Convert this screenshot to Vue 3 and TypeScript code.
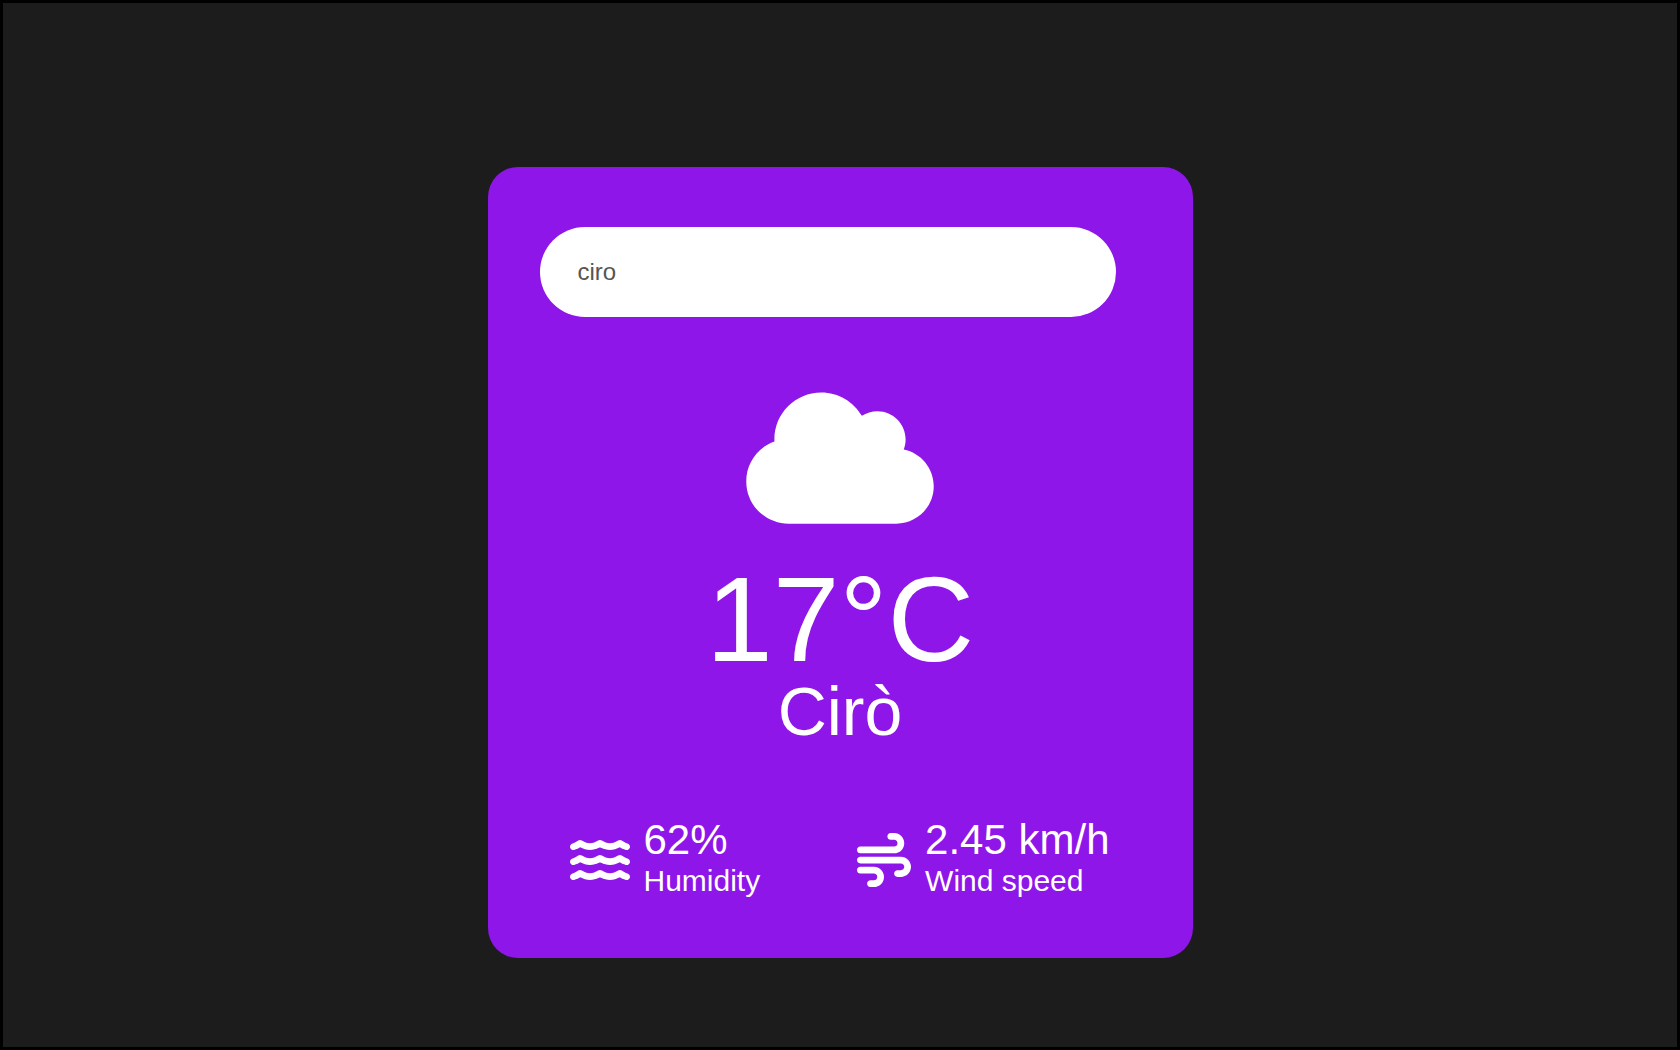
<script setup lang="ts">
import { ref } from 'vue'

interface Weather {
  temperature: number
  city: string
  humidity: number
  windSpeed: number
}

const query = ref('ciro')
const weather = ref<Weather>({
  temperature: 17,
  city: 'Cirò',
  humidity: 62,
  windSpeed: 2.45,
})
</script>

<template>
  <div class="page">
    <main class="card">
      <form class="search" role="search" @submit.prevent>
        <input v-model="query" class="search-input" type="text" aria-label="City" autocomplete="off" spellcheck="false" />
      </form>

      <section class="current">
        <svg class="cloud" viewBox="0 0 640 512" aria-hidden="true">
          <path d="M0 336c0 79.5 64.5 144 144 144H512c70.7 0 128-57.3 128-128c0-61.9-44-113.6-102.4-125.4c4.1-10.7 6.4-22.4 6.4-34.6c0-53-43-96-96-96c-19.7 0-38.1 6-53.3 16.2C367 64.2 315.3 32 256 32C167.6 32 96 103.6 96 192c0 2.7 .1 5.4 .2 8.1C40.2 219.8 0 273.2 0 336z" />
        </svg>
        <h1 class="temperature">{{ weather.temperature }}°C</h1>
        <h2 class="city">{{ weather.city }}</h2>
      </section>

      <section class="details">
        <div class="detail">
          <svg class="icon-water" viewBox="0 0 576 512" aria-hidden="true">
            <defs>
              <path id="wave" d="M269.5 69.9c11.1-7.9 25.9-7.9 37 0C329 85.4 356.5 96 384 96c26.9 0 55.4-10.8 77.4-26.1c11.9-8.5 28.1-7.8 39.2 1.7c14.4 11.9 32.5 21 50.6 25.2c17.2 4 27.9 21.2 23.9 38.4s-21.2 27.9-38.4 23.9c-24.5-5.7-44.9-16.5-58.2-25C449.5 149.7 417 160 384 160c-31.9 0-60.6-9.9-80.4-18.9c-5.8-2.7-11.1-5.3-15.6-7.7c-4.5 2.4-9.7 5.1-15.6 7.7c-19.8 9-48.5 18.9-80.4 18.9c-33 0-65.5-10.3-94.5-25.8c-13.4 8.4-33.7 19.3-58.2 25c-17.2 4-34.4-6.7-38.4-23.9s6.7-34.4 23.9-38.4C42.8 92.6 61 83.5 75.3 71.6c11.1-9.5 27.3-10.1 39.2-1.7C136.7 85.2 165.1 96 192 96c27.5 0 55-10.6 77.5-26.1z" />
            </defs>
            <use href="#wave" />
            <use href="#wave" y="144" />
            <use href="#wave" y="288" />
          </svg>
          <div>
            <p class="value">{{ weather.humidity }}%</p>
            <p class="label">Humidity</p>
          </div>
        </div>
        <div class="detail">
          <svg class="icon-wind" viewBox="0 0 512 512" aria-hidden="true">
            <path d="M288 32c0 17.7 14.3 32 32 32h32c17.7 0 32 14.3 32 32s-14.3 32-32 32H32c-17.7 0-32 14.3-32 32s14.3 32 32 32H352c53 0 96-43 96-96s-43-96-96-96H320c-17.7 0-32 14.3-32 32zm64 352c0 17.7 14.3 32 32 32h32c53 0 96-43 96-96s-43-96-96-96H32c-17.7 0-32 14.3-32 32s14.3 32 32 32H416c17.7 0 32 14.3 32 32s-14.3 32-32 32H384c-17.7 0-32 14.3-32 32zM128 512h32c53 0 96-43 96-96s-43-96-96-96H32c-17.7 0-32 14.3-32 32s14.3 32 32 32H160c17.7 0 32 14.3 32 32s-14.3 32-32 32H128c-17.7 0-32 14.3-32 32s14.3 32 32 32z" />
          </svg>
          <div>
            <p class="value">{{ weather.windSpeed }} km/h</p>
            <p class="label">Wind speed</p>
          </div>
        </div>
      </section>
    </main>
  </div>
</template>

<style>
body {
  margin: 0;
  background: #1c1c1c;
}
</style>

<style scoped>
.page {
  box-sizing: border-box;
  min-height: 100vh;
  padding: 164px 16px 40px;
  border: 3px solid #000;
  background: #1c1c1c;
  color: #fff;
  font-family: Arial, 'Liberation Sans', sans-serif;
}

.card {
  box-sizing: border-box;
  max-width: 705px;
  margin: 0 auto;
  padding: 60px 52px 57px;
  border-radius: 30px;
  background: #8e16e8;
}

.search {
  display: flex;
  padding-right: 25px;
}

.search-input {
  flex: 1;
  box-sizing: border-box;
  min-width: 0;
  height: 90px;
  padding: 0 38px;
  border: 0;
  border-radius: 45px;
  outline: 0;
  background: #fff;
  color: #555;
  font-family: inherit;
  font-size: 24px;
}

.current {
  display: flex;
  flex-direction: column;
  align-items: center;
  margin-top: 66px;
}

svg {
  flex: none;
  fill: currentColor;
}

.cloud {
  width: 188px;
  height: 150px;
  margin-bottom: 28px;
}

.temperature,
.city {
  margin: 0;
  font-weight: 400;
}

.temperature {
  font-size: 120px;
  line-height: 116px;
}

.city {
  font-size: 68px;
  line-height: 68px;
}

.details {
  display: flex;
  flex-wrap: wrap;
  justify-content: space-between;
  gap: 24px;
  margin-top: 74px;
  padding: 0 31px 0 30px;
}

.detail {
  display: flex;
  align-items: center;
  gap: 14px;
}

.icon-water {
  width: 60px;
  height: 54px;
}

.icon-wind {
  width: 54px;
  height: 54px;
}

.value,
.label {
  margin: 0;
}

.value {
  font-size: 42px;
  line-height: 42px;
}

.label {
  font-size: 30px;
  line-height: 40px;
}
</style>
